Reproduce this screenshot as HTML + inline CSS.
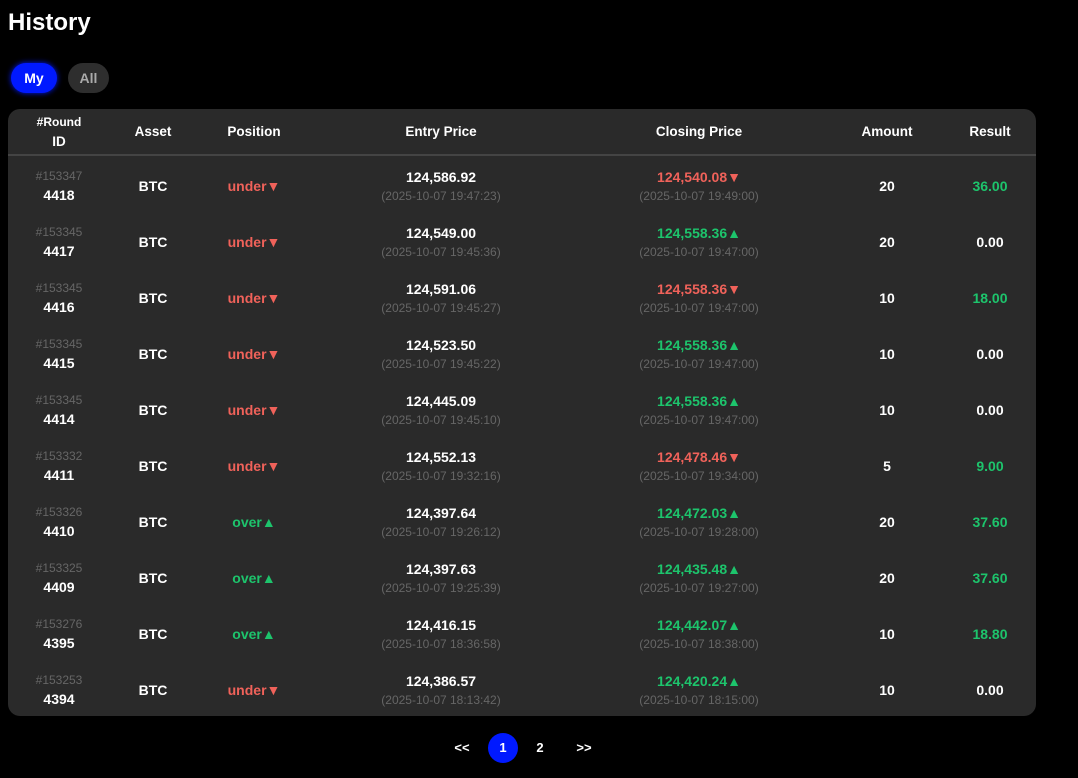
<!DOCTYPE html>
<html><head><meta charset="utf-8"><style>
*{margin:0;padding:0;box-sizing:border-box}
body{width:1078px;height:778px;background:#000;font-family:"Liberation Sans",sans-serif;color:#fff;position:relative;overflow:hidden}
h1{position:absolute;left:8px;top:9px;font-size:24px;font-weight:bold}
.tab{position:absolute;top:63px;height:30px;border-radius:15px;font-size:14px;line-height:30px;text-align:center;font-weight:bold}
.tbl{position:absolute;left:8px;top:109px;width:1028px;height:607px;background:#2a2a2a;border-radius:12px;overflow:hidden}
.row{position:absolute;left:0;width:1028px;display:flex;align-items:center}
.row>div{text-align:center;font-size:14px;font-weight:bold}
.c1{width:102px}.c2{width:86px}.c3{width:116px}.c4{width:258px}.c5{width:258px}.c6{width:118px}.c7{width:88px}
.hd{top:0;height:47px;border-bottom:2px solid #444}
.hd>div{font-size:13.5px}
.s{display:block;font-size:12px;font-weight:normal;color:#666;margin-top:4px}
.s0{display:block;font-size:12px;font-weight:normal;color:#666;margin-bottom:4px}
.r{color:#f0625a}.g{color:#1dc46c}
.pg{position:absolute;top:733px;font-size:13px;font-weight:bold;height:30px;line-height:30px;text-align:center}
</style></head><body>
<h1>History</h1>
<div class="tab" style="left:11px;width:46px;background:#0019ff;box-shadow:0 0 6px #0019ff">My</div>
<div class="tab" style="left:68px;width:41px;background:#2e2e2e;color:#aaa">All</div>
<div class="tbl">
<div class="row hd"><div class="c1" style="font-size:12px;line-height:20px">#Round<br><span style="font-size:13.5px">ID</span></div><div class="c2">Asset</div><div class="c3">Position</div><div class="c4">Entry Price</div><div class="c5">Closing Price</div><div class="c6">Amount</div><div class="c7">Result</div></div>
</div>
<script>
const d=[["153347","4418","u","124,586.92","19:47:23","124,540.08","u","19:49:00","20","36.00",1],
["153345","4417","u","124,549.00","19:45:36","124,558.36","o","19:47:00","20","0.00",0],
["153345","4416","u","124,591.06","19:45:27","124,558.36","u","19:47:00","10","18.00",1],
["153345","4415","u","124,523.50","19:45:22","124,558.36","o","19:47:00","10","0.00",0],
["153345","4414","u","124,445.09","19:45:10","124,558.36","o","19:47:00","10","0.00",0],
["153332","4411","u","124,552.13","19:32:16","124,478.46","u","19:34:00","5","9.00",1],
["153326","4410","o","124,397.64","19:26:12","124,472.03","o","19:28:00","20","37.60",1],
["153325","4409","o","124,397.63","19:25:39","124,435.48","o","19:27:00","20","37.60",1],
["153276","4395","o","124,416.15","18:36:58","124,442.07","o","18:38:00","10","18.80",1],
["153253","4394","u","124,386.57","18:13:42","124,420.24","o","18:15:00","10","0.00",0]];
let h="";d.forEach((r,i)=>{const t=49+i*56;
const pos=r[2]=="u"?'<span class="r">under▼</span>':'<span class="g">over▲</span>';
const cl=r[6]=="u"?'r':'g',ar=r[6]=="u"?'▼':'▲';
h+=`<div class="row" style="top:${t}px;height:56px"><div class="c1"><span class="s0">#${r[0]}</span>${r[1]}</div><div class="c2">BTC</div><div class="c3">${pos}</div><div class="c4">${r[3]}<span class="s">(2025-10-07 ${r[4]})</span></div><div class="c5"><span class="${cl}">${r[5]}${ar}</span><span class="s">(2025-10-07 ${r[7]})</span></div><div class="c6">${r[8]}</div><div class="c7 ${r[10]?'g':''}">${r[9]}</div></div>`;});
document.querySelector('.tbl').insertAdjacentHTML('beforeend',h);
</script>
<div class="pg" style="left:450px;width:24px">&lt;&lt;</div>
<div class="pg" style="left:488px;width:30px;background:#0019ff;border-radius:50%">1</div>
<div class="pg" style="left:530px;width:20px">2</div>
<div class="pg" style="left:572px;width:24px">&gt;&gt;</div>
</body></html>
